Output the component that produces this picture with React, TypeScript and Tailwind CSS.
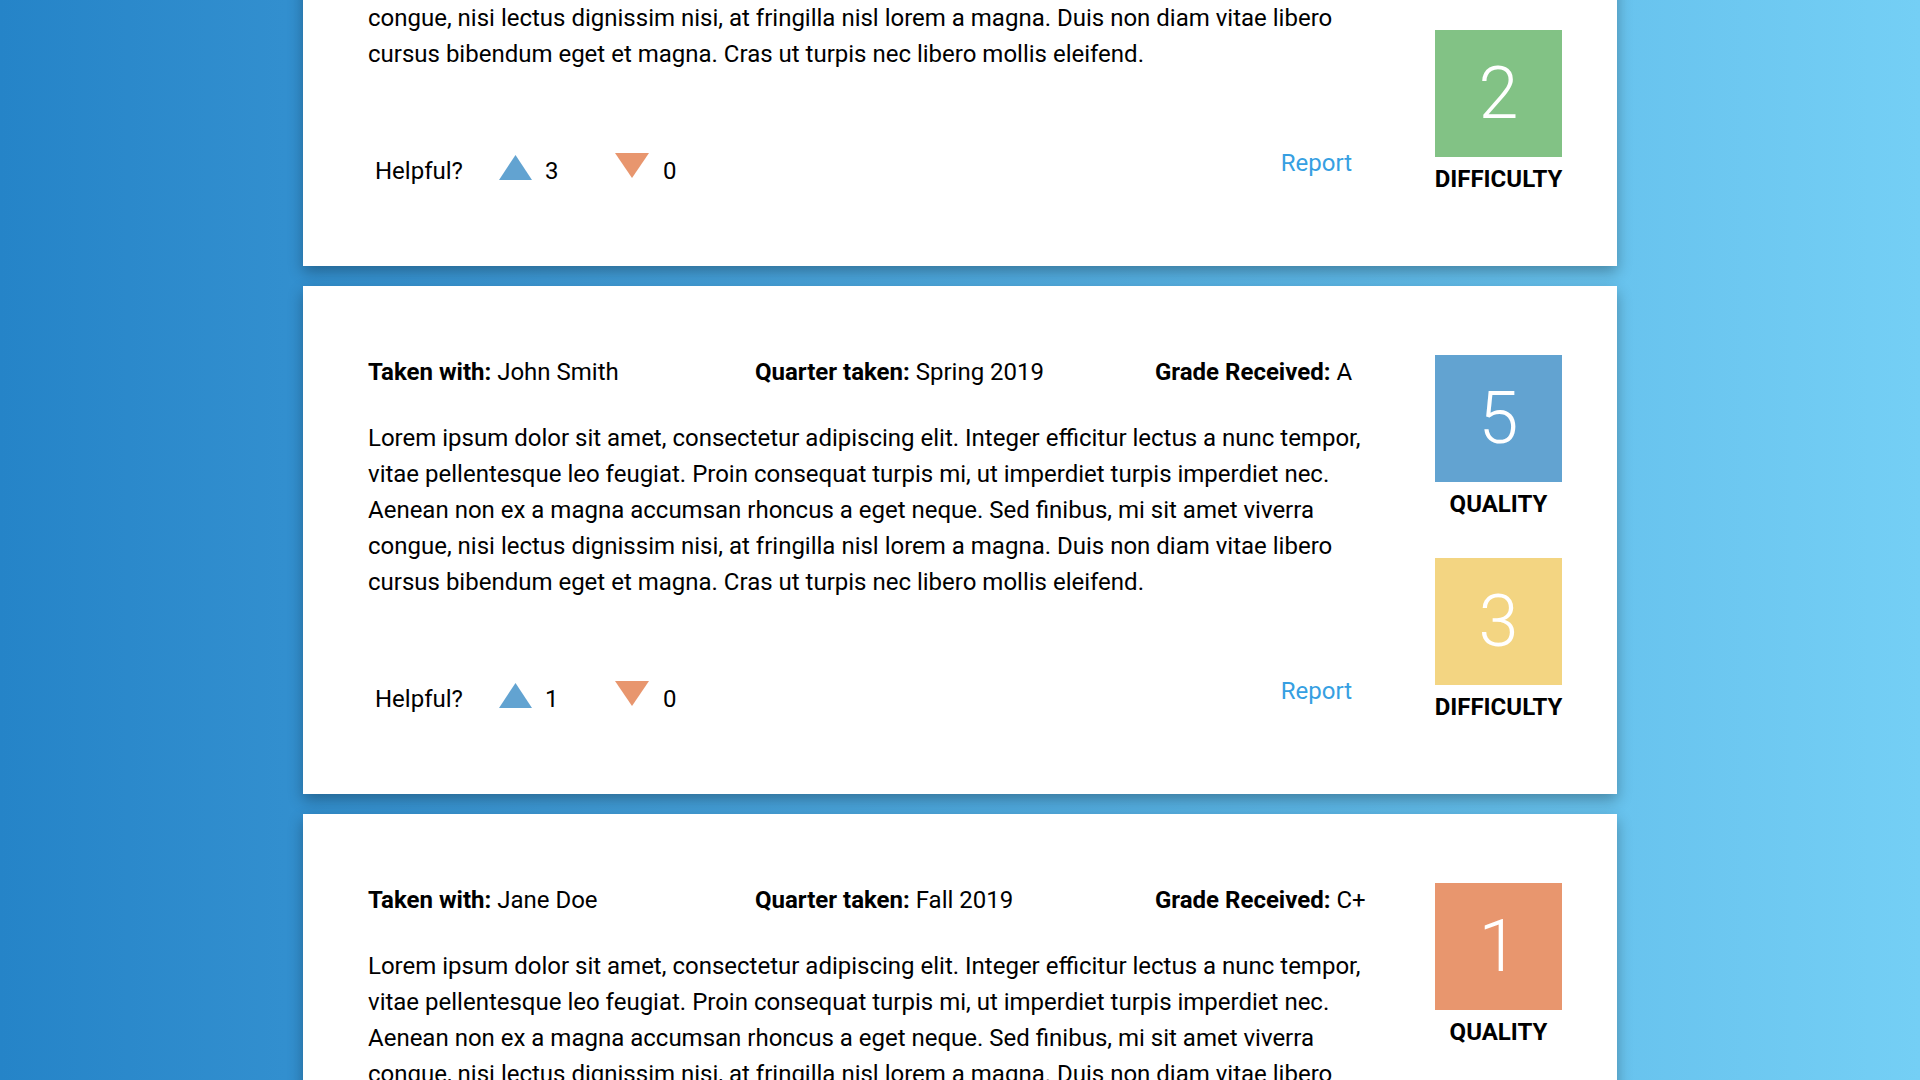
import React from 'react';

interface Review {
  id: number;
  takenWith: string;
  quarter: string;
  grade: string;
  quality: number;
  difficulty: number;
  up: number;
  down: number;
}

const LOREM =
  'Lorem ipsum dolor sit amet, consectetur adipiscing elit. Integer efficitur lectus a nunc tempor, vitae pellentesque leo feugiat. Proin consequat turpis mi, ut imperdiet turpis imperdiet nec. Aenean non ex a magna accumsan rhoncus a eget neque. Sed finibus, mi sit amet viverra congue, nisi lectus dignissim nisi, at fringilla nisl lorem a magna. Duis non diam vitae libero cursus bibendum eget et magna. Cras ut turpis nec libero mollis eleifend.';

const reviews: Review[] = [
  { id: 1, takenWith: 'John Smith', quarter: 'Winter 2019', grade: 'B+', quality: 4, difficulty: 2, up: 3, down: 0 },
  { id: 2, takenWith: 'John Smith', quarter: 'Spring 2019', grade: 'A', quality: 5, difficulty: 3, up: 1, down: 0 },
  { id: 3, takenWith: 'Jane Doe', quarter: 'Fall 2019', grade: 'C+', quality: 1, difficulty: 4, up: 0, down: 2 },
];

const boxColor = (kind: 'quality' | 'difficulty', value: number) => {
  if (kind === 'quality') {
    if (value >= 5) return 'bg-[#62a3d1]';
    if (value >= 3) return 'bg-[#82c285]';
    return 'bg-[#e8966e]';
  }
  if (value <= 2) return 'bg-[#82c285]';
  if (value === 3) return 'bg-[#f3d582]';
  return 'bg-[#e8966e]';
};

const ScoreBox: React.FC<{ value: number; label: string; color: string; className?: string }> = ({
  value,
  label,
  color,
  className = '',
}) => (
  <div className={`flex flex-col items-center ${className}`}>
    <div className={`flex h-[127px] w-[127px] items-center justify-center ${color}`}>
      <span className="text-[72px] font-light leading-none text-white">{value}</span>
    </div>
    <div className="mt-[8px] text-[24px] font-bold leading-[28px] text-black">{label}</div>
  </div>
);

const ReviewCard: React.FC<{ review: Review }> = ({ review }) => (
  <div className="flex h-[508px] w-[1314px] items-start bg-white pl-[65px] pr-[55px] pt-[69px] shadow-[0_6px_14px_rgba(0,0,0,0.3)]">
    <div className="w-[1000px] text-black">
      <div className="mt-[3px] flex text-[24px] leading-[28px]">
        <div className="w-[387px]">
          <span className="font-bold">Taken with:</span> {review.takenWith}
        </div>
        <div className="w-[400px]">
          <span className="font-bold">Quarter taken:</span> {review.quarter}
        </div>
        <div>
          <span className="font-bold">Grade Received:</span> {review.grade}
        </div>
      </div>

      <p className="mt-[34px] text-[24px] leading-[36px]">{LOREM}</p>

      <div className="mt-[77px] flex items-end">
        <div className="flex items-end pl-[7px] text-[24px] leading-[28px]">
          <span>Helpful?</span>
          <div className="ml-[36px] flex w-[116px] items-end">
            <svg className="mb-[5px] h-[25px] w-[33px]" viewBox="0 0 33 25">
              <polygon points="16.5,0 33,25 0,25" fill="#62a3d1" />
            </svg>
            <span className="ml-[13px]">{review.up}</span>
          </div>
          <div className="flex items-end">
            <svg className="mb-[7px] h-[25px] w-[34px]" viewBox="0 0 34 25">
              <polygon points="0,0 34,0 17,25" fill="#e8966e" />
            </svg>
            <span className="ml-[14px]">{review.down}</span>
          </div>
        </div>
        <a className="mb-[8px] ml-auto mr-[16px] cursor-pointer text-[24px] leading-[28px] text-[#369fe2]">
          Report
        </a>
      </div>
    </div>

    <div className="ml-[67px] flex w-[127px] flex-col">
      <ScoreBox value={review.quality} label="QUALITY" color={boxColor('quality', review.quality)} />
      <ScoreBox
        value={review.difficulty}
        label="DIFFICULTY"
        color={boxColor('difficulty', review.difficulty)}
        className="mt-[40px]"
      />
    </div>
  </div>
);

export default function App() {
  return (
    <div className="h-[1080px] w-full overflow-hidden bg-linear-to-r from-[#2584c8] to-[#74cff5] font-['Roboto',sans-serif]">
      <div className="mt-[-242px] flex flex-col items-center gap-[20px]">
        {reviews.map((review) => (
          <ReviewCard key={review.id} review={review} />
        ))}
      </div>
    </div>
  );
}
